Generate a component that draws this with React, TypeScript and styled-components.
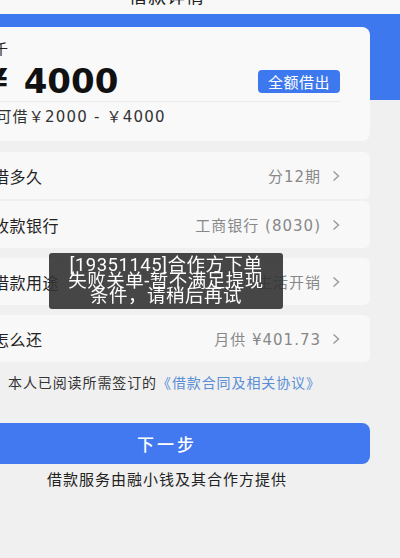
import * as React from 'react';
import styled, {createGlobalStyle} from 'styled-components';

const GlobalStyle = createGlobalStyle`
  html, body {
    margin: 0;
    padding: 0;
    overflow: hidden;
    background: #f0f0f0;
  }
  body {
    font-family: "DejaVu Sans", "Noto Sans CJK SC", sans-serif;
    color: #222;
  }
`;

const Page = styled.div`
  width: 466px;
  margin-left: -66px;
  min-height: 600px;
  background: #f0f0f0;
`;

const Header = styled.div`
  height: 34px;
  margin-top: -22px;
  padding-bottom: 2px;
  display: flex;
  align-items: center;
  justify-content: center;
  background: #f8f8f8;
  font-size: 18px;
  letter-spacing: 1px;
  color: #222;
`;

const Hero = styled.div`
  padding: 13px 30px 0;
  background: linear-gradient(to bottom, #3d78ee 86px, transparent 86px);
`;

const Card = styled.div`
  background: #f9f9f9;
  border-radius: 8px;
  padding: 10px 30px 14px 0;
`;

const Caption = styled.div`
  font-size: 14px;
  line-height: 24px;
  letter-spacing: 1px;
`;

const AmountRow = styled.div`
  height: 40px;
  display: flex;
  align-items: center;
  justify-content: space-between;
`;

const Amount = styled.div`
  padding-left: 20px;
  font-size: 34px;
  font-weight: bold;
  color: #111;
  >.yen{
    margin-right: 16px;
  }
`;

const FullButton = styled.button`
  width: 82px;
  height: 23px;
  border: none;
  border-radius: 4px;
  background: #3d78ee;
  color: white;
  font-family: inherit;
  font-size: 15px;
  letter-spacing: 0.5px;
  padding: 0;
`;

const Divider = styled.div`
  height: 1px;
  background: #ececec;
`;

const Range = styled.div`
  margin-top: 5px;
  font-size: 15px;
  line-height: 20px;
  letter-spacing: 1.2px;
  color: #333;
`;

const Rows = styled.div`
  padding: 0 30px;
  margin-top: 11px;
  display: flex;
  flex-direction: column;
  gap: 10px;
`;

const RowGroup = styled.div`
  display: flex;
  flex-direction: column;
  gap: 2px;
`;

const Row = styled.div`
  height: 47px;
  padding: 0 30px;
  display: flex;
  align-items: center;
  justify-content: space-between;
  background: #f8f8f8;
  border-radius: 6px;
  font-size: 16px;
  letter-spacing: 0.5px;
  >.label{
    margin-left: -1px;
  }
  >.value{
    display: flex;
    align-items: center;
    gap: 11px;
    font-size: 15px;
    letter-spacing: 1px;
    color: #888;
  }
`;

const Agreement = styled.div`
  margin-top: 11px;
  padding: 0 30px 0 48px;
  display: flex;
  align-items: center;
  gap: 11px;
  font-size: 14px;
  line-height: 20px;
  letter-spacing: 0.9px;
  color: #333;
  >span>.link{
    color: #5a8fd8;
  }
`;

const Check = styled.span`
  width: 13px;
  height: 13px;
  border-radius: 50%;
  border: 1px solid #bbb;
  flex: none;
`;

const NextButton = styled.button`
  display: block;
  width: calc(100% - 60px);
  margin: 30px 30px 0;
  height: 41px;
  border: none;
  border-radius: 8px;
  background: #4279f1;
  color: white;
  font-family: inherit;
  font-size: 17px;
  font-weight: 500;
  letter-spacing: 3px;
`;

const Footer = styled.div`
  margin-top: 6px;
  text-align: center;
  font-size: 15px;
  line-height: 20px;
  letter-spacing: 1px;
  color: #222;
`;

const Toast = styled.div`
  position: fixed;
  left: 49px;
  top: 253px;
  width: 234px;
  padding: 5px 0 4px;
  border-radius: 3px;
  background: rgba(50, 50, 50, 0.9);
  color: white;
  text-align: center;
  font-family: Roboto, "Noto Sans CJK SC", sans-serif;
  font-size: 18.5px;
  line-height: 15.5px;
  letter-spacing: 0.5px;
`;

const Chevron = () => (
  <svg width="8" height="12" viewBox="0 0 8 12">
    <polyline points="1.5,1.5 6.5,6 1.5,10.5" fill="none" stroke="#999" strokeWidth="1.4"/>
  </svg>
);

const rows = [
  [{label: '借多久', value: '分12期'}, {label: '收款银行', value: '工商银行 (8030)'}],
  [{label: '借款用途', value: '生活开销'}],
  [{label: '怎么还', value: '月供 ¥401.73'}],
];

const App = () => {
  return (
    <Page>
      <GlobalStyle/>
      <Header>借款详情</Header>
      <Hero>
        <Card>
          <Caption>借几千</Caption>
          <AmountRow>
            <Amount><span className="yen">¥</span>4000</Amount>
            <FullButton>全额借出</FullButton>
          </AmountRow>
          <Divider/>
          <Range>单笔可借￥2000 - ￥4000</Range>
        </Card>
      </Hero>
      <Rows>
        {rows.map((group, i) =>
          <RowGroup key={i}>
            {group.map(r =>
              <Row key={r.label}>
                <span className="label">{r.label}</span>
                <span className="value">{r.value}<Chevron/></span>
              </Row>
            )}
          </RowGroup>
        )}
      </Rows>
      <Agreement>
        <Check/>
        <span>本人已阅读所需签订的<span className="link">《借款合同及相关协议》</span></span>
      </Agreement>
      <NextButton>下一步</NextButton>
      <Footer>借款服务由融小钱及其合作方提供</Footer>
      <Toast>
        [19351145]合作方下单<br/>
        失败关单-暂不满足提现<br/>
        条件，请稍后再试
      </Toast>
    </Page>
  );
};

export default App;
